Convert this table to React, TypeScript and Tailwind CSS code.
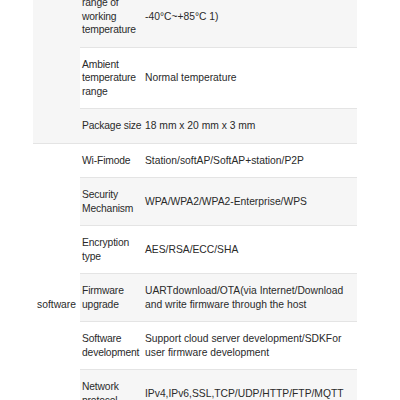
const rows: { group?: { label: string; span: number }; name: string[]; value: string[] }[] = [
  { group: { label: '', span: 3 }, name: ['range of', 'working', 'temperature'], value: ['-40°C~+85°C 1)'] },
  { name: ['Ambient', 'temperature', 'range'], value: ['Normal temperature'] },
  { name: ['Package size'], value: ['18 mm x 20 mm x 3 mm'] },
  { group: { label: 'software', span: 7 }, name: ['Wi-Fimode'], value: ['Station/softAP/SoftAP+station/P2P'] },
  { name: ['Security', 'Mechanism'], value: ['WPA/WPA2/WPA2-Enterprise/WPS'] },
  { name: ['Encryption', 'type'], value: ['AES/RSA/ECC/SHA'] },
  {
    name: ['Firmware', 'upgrade'],
    value: ['UARTdownload/OTA(via Internet/Download', 'and write firmware through the host'],
  },
  {
    name: ['Software', 'development'],
    value: ['Support cloud server development/SDKFor', 'user firmware development'],
  },
  { name: ['Network', 'protocol'], value: ['IPv4,IPv6,SSL,TCP/UDP/HTTP/FTP/MQTT'] },
  { name: ['User', 'configuration'], value: ['AT+instruction set, cloud server, Android/iOS APP'] },
];

export default function App() {
  return (
    <div
      className="w-[400px] h-[400px] overflow-hidden bg-white text-[#2a2a2a] text-[10.3px] leading-[13.5px]"
      style={{ fontFamily: '"Liberation Sans", Arial, sans-serif' }}
    >
      <table className="ml-[33px] -mt-[14px] w-[324px] table-fixed border-collapse">
        <colgroup>
          <col className="w-[47px]" />
          <col className="w-[63px]" />
          <col className="w-[214px]" />
        </colgroup>
        <tbody>
          {rows.map((r, i) => (
            <tr key={i} className={i % 2 === 0 ? 'bg-[#f6f6f6]' : 'bg-white'}>
              {r.group && (
                <td
                  rowSpan={r.group.span}
                  className="border-b border-[#e4e4e4] text-center align-middle px-[2px]"
                >
                  {r.group.label}
                </td>
              )}
              <td className="border-b border-[#e4e4e4] py-[10px] pl-[2px] pr-[2px] whitespace-nowrap align-middle tracking-[-0.15px]">
                {r.name.map((t, j) => (
                  <div key={j}>{t}</div>
                ))}
              </td>
              <td className="border-b border-[#e4e4e4] py-[10px] pl-[2px] pr-[12px] whitespace-nowrap align-middle">
                {r.value.map((t, j) => (
                  <div key={j}>{t}</div>
                ))}
              </td>
            </tr>
          ))}
        </tbody>
      </table>
    </div>
  );
}
